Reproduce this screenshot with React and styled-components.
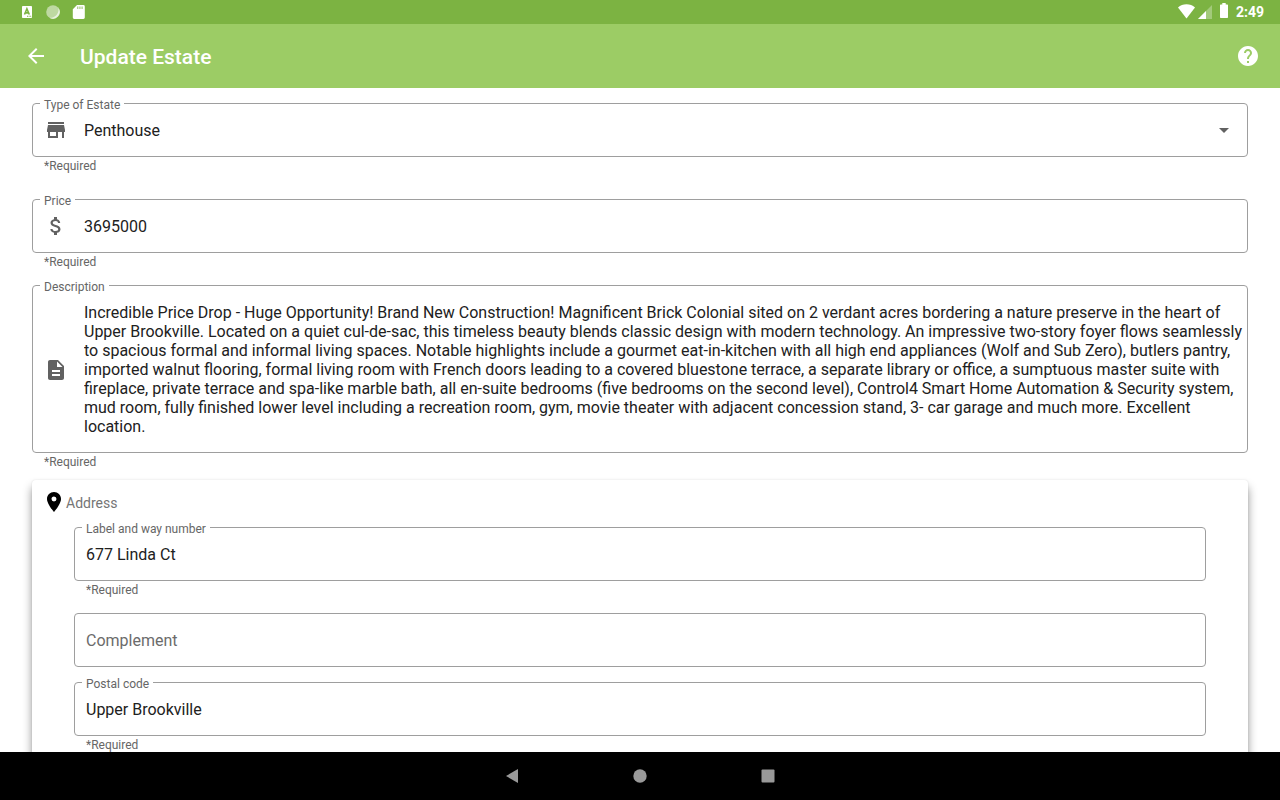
import React, { useId } from "react";
import styled, { createGlobalStyle, css } from "styled-components";
import {
  MdArrowBack,
  MdArrowDropDown,
  MdAttachMoney,
  MdDescription,
  MdHelp,
  MdPlace,
  MdStore,
} from "react-icons/md";

const GlobalStyle = createGlobalStyle`
  *, *::before, *::after { box-sizing: border-box; }
  body {
    margin: 0;
    background: #fff;
    color: #212121;
    font-family: Roboto, "Noto Sans", sans-serif;
    font-size: 16px;
  }
`;

const Screen = styled.div`
  display: flex;
  flex-direction: column;
  height: 100vh;
`;

const StatusBar = styled.div`
  display: flex;
  flex: none;
  align-items: center;
  justify-content: space-between;
  height: 24px;
  padding: 0 16px 0 20px;
  background: #7cb342;
  color: #fff;
`;

const StatusGroup = styled.div`
  display: flex;
  align-items: center;
  gap: ${(p) => p.$gap}px;

  svg {
    display: block;
  }
`;

const Clock = styled.time`
  font-size: 14px;
  font-weight: 700;
  line-height: 24px;
`;

const AppBar = styled.header`
  display: flex;
  flex: none;
  align-items: center;
  height: 64px;
  padding: 0 8px 0 12px;
  background: #9ccc65;
  color: #fff;
`;

const IconButton = styled.button`
  display: grid;
  place-items: center;
  width: 48px;
  height: 48px;
  padding: 0;
  border: 0;
  background: none;
  color: inherit;
  cursor: pointer;
`;

const Title = styled.h1`
  flex: 1;
  margin: 0 0 0 20px;
  padding-top: 2px;
  font-size: 21px;
  font-weight: 500;
  line-height: 24px;
`;

const Content = styled.main`
  flex: 1;
  min-height: 0;
  overflow-y: auto;
  scrollbar-width: none;
`;

const Form = styled.form`
  padding: 15px 32px 32px;
`;

const FieldRoot = styled.div`
  margin-bottom: ${(p) => p.$space}px;
`;

const Outline = styled.div`
  position: relative;
  display: flex;
  align-items: center;
  gap: 16px;
  min-height: 54px;
  padding: ${(p) => (p.$multiline ? "17px 3px 16px 11px" : "0 11px")};
  border: 1px solid #9e9e9e;
  border-radius: 4px;

  > svg {
    flex: none;
    color: #616161;
  }
`;

const FloatingLabel = styled.label`
  position: absolute;
  top: -7px;
  left: 7px;
  padding: 0 4px;
  background: #fff;
  color: #666;
  font-size: 12px;
  line-height: 16px;
`;

const control = css`
  flex: 1;
  min-width: 0;
  width: 100%;
  margin: 0;
  padding: 0;
  border: 0;
  outline: 0;
  background: transparent;
  color: #212121;
  font-family: inherit;
  font-size: 16px;
  line-height: 19px;
`;

const TextInput = styled.input`
  ${control}
  height: 52px;

  &::placeholder {
    color: #6b6b6b;
    opacity: 1;
  }
`;

const TextArea = styled.textarea`
  ${control}
  display: block;
  field-sizing: content;
  overflow: hidden;
  resize: none;
`;

const Select = styled.select`
  ${control}
  height: 52px;
  appearance: none;
`;

const Helper = styled.p`
  margin: 0;
  padding-left: 12px;
  color: #666;
  font-size: 12px;
  line-height: 18px;
`;

const Card = styled.section`
  padding: 10px 42px 24px;
  border-radius: 4px;
  background: #fff;
  box-shadow: 0 0 2px rgba(0, 0, 0, 0.1), 0 7px 10px rgba(0, 0, 0, 0.42);
`;

const CardHeader = styled.header`
  display: flex;
  align-items: center;
  margin: 0 0 11px -32px;
  color: #000;

  svg {
    align-self: flex-start;
  }
`;

const CardTitle = styled.h2`
  margin: 0;
  color: #757575;
  font-size: 14px;
  font-weight: 400;
  line-height: 26px;
`;

const NavBar = styled.nav`
  display: flex;
  flex: none;
  justify-content: center;
  height: 48px;
  background: #000;
`;

const NavButton = styled.button`
  display: grid;
  place-items: center;
  width: 128px;
  padding: 0;
  border: 0;
  background: none;
  cursor: pointer;
`;

function Field({ label, icon, required, multiline, space, children }) {
  const id = useId();
  const helperId = `${id}-helper`;
  return (
    <FieldRoot $space={space}>
      <Outline $multiline={multiline}>
        <FloatingLabel htmlFor={id}>{label}</FloatingLabel>
        {icon}
        {children({ id, "aria-describedby": required ? helperId : undefined })}
      </Outline>
      {required && <Helper id={helperId}>*Required</Helper>}
    </FieldRoot>
  );
}

const KeyboardIcon = () => (
  <svg width="14" height="14" viewBox="0 0 14 14" aria-hidden="true">
    <rect x="2" y="1" width="10" height="12" rx="0.8" fill="#fff" />
    <path
      fill="none"
      stroke="#7cb342"
      strokeWidth="1.6"
      d="M4.5 9.500 6.900 3.800l2.400 5.700M5.400 7.900h3"
    />
    <path fill="#7cb342" d="M7 10.700h1v1H7zm1.600 0h1v1h-1zm1.600 0h1v1h-1z" />
  </svg>
);

const SyncIcon = () => (
  <svg width="14" height="14" viewBox="0 0 14 14" aria-hidden="true">
    <circle cx="7" cy="7" r="6.800" fill="#fff" fillOpacity="0.5" />
    <path
      fill="#fff"
      fillOpacity="0.65"
      d="M12.200 2.600a6.800 6.800 0 0 1-8.800 10.100A8 8 0 0 0 12.200 2.600z"
    />
  </svg>
);

const SdCardIcon = () => (
  <svg width="13" height="14" viewBox="0 0 13 14" aria-hidden="true">
    <path
      fill="#fff"
      d="M5 0h6.400A1.400 1.400 0 0 1 12.800 1.400v11.200a1.400 1.400 0 0 1-1.400 1.400H2.200A1.400 1.400 0 0 1 .8 12.600V4.200z"
    />
    <path
      fill="#7cb342"
      fillOpacity="0.6"
      d="M5 1.500h1.400v2.500H5zm2.200 0h1.400v2.500H7.200zm2.200 0h1.400v2.500H9.400z"
    />
  </svg>
);

const WifiIcon = () => (
  <svg width="18" height="16" viewBox="0 0 18 16" aria-hidden="true">
    <path fill="#fff" d="M8.500 14.500 0 3.500C2.300 1.400 5.300.3 8.500.3s6.200 1.100 8.500 3.200z" />
  </svg>
);

const SignalIcon = () => (
  <svg width="14" height="16" viewBox="0 0 14 16" aria-hidden="true">
    <path fill="#fff" fillOpacity="0.3" d="M0 15 14 1v14z" />
    <path fill="#fff" d="M0 15 8 7v8z" />
  </svg>
);

const BatteryIcon = () => (
  <svg width="8" height="18" viewBox="0 0 8 18" aria-hidden="true">
    <path
      fill="#fff"
      d="M2.300 0h3.400v1.500h1.600a.7.7 0 0 1 .7.7v12.100a.7.7 0 0 1-.7.7H.7a.7.7 0 0 1-.7-.7V2.200a.7.7 0 0 1 .7-.7h1.600z"
    />
  </svg>
);

const BackShape = () => (
  <svg width="14" height="14" viewBox="0 0 14 14" aria-hidden="true">
    <path fill="#999" d="M13 0v14L1 7z" />
  </svg>
);

const HomeShape = () => (
  <svg width="14" height="14" viewBox="0 0 14 14" aria-hidden="true">
    <circle cx="7" cy="7" r="6.700" fill="#999" />
  </svg>
);

const RecentsShape = () => (
  <svg width="14" height="14" viewBox="0 0 14 14" aria-hidden="true">
    <rect x=".5" y=".5" width="13" height="13" rx="1" fill="#999" />
  </svg>
);

const description =
  "Incredible Price Drop - Huge Opportunity! Brand New Construction! Magnificent Brick Colonial sited on 2 verdant acres bordering a nature preserve in the heart of Upper Brookville. Located on a quiet cul-de-sac, this timeless beauty blends classic design with modern technology. An impressive two-story foyer flows seamlessly to spacious formal and informal living spaces. Notable highlights include a gourmet eat-in-kitchen with all high end appliances (Wolf and Sub Zero), butlers pantry, imported walnut flooring, formal living room with French doors leading to a covered bluestone terrace, a separate library or office, a sumptuous master suite with fireplace, private terrace and spa-like marble bath, all en-suite bedrooms (five bedrooms on the second level), Control4 Smart Home Automation & Security system, mud room, fully finished lower level including a recreation room, gym, movie theater with adjacent concession stand, 3- car garage and much more. Excellent location.";

export default function App() {
  return (
    <>
      <GlobalStyle />
      <Screen>
        <StatusBar>
          <StatusGroup $gap={12}>
            <KeyboardIcon />
            <SyncIcon />
            <SdCardIcon />
          </StatusGroup>
          <StatusGroup $gap={8}>
            <StatusGroup $gap={2}>
              <WifiIcon />
              <SignalIcon />
            </StatusGroup>
            <BatteryIcon />
            <Clock>2:49</Clock>
          </StatusGroup>
        </StatusBar>

        <AppBar>
          <IconButton type="button" aria-label="Back">
            <MdArrowBack size={24} />
          </IconButton>
          <Title>Update Estate</Title>
          <IconButton type="button" aria-label="Help">
            <MdHelp size={24} />
          </IconButton>
        </AppBar>

        <Content>
          <Form>
            <Field label="Type of Estate" icon={<MdStore size={24} />} required space={24}>
              {(props) => (
                <>
                  <Select {...props} defaultValue="Penthouse">
                    <option>Penthouse</option>
                  </Select>
                  <MdArrowDropDown size={24} aria-hidden="true" />
                </>
              )}
            </Field>

            <Field label="Price" icon={<MdAttachMoney size={24} />} required space={14}>
              {(props) => <TextInput {...props} inputMode="numeric" defaultValue="3695000" />}
            </Field>

            <Field
              label="Description"
              icon={<MdDescription size={24} />}
              required
              multiline
              space={9}
            >
              {(props) => <TextArea {...props} defaultValue={description} />}
            </Field>

            <Card>
              <CardHeader>
                <MdPlace size={24} aria-hidden="true" />
                <CardTitle>Address</CardTitle>
              </CardHeader>

              <Field label="Label and way number" required space={14}>
                {(props) => <TextInput {...props} defaultValue="677 Linda Ct" />}
              </Field>

              <FieldRoot $space={15}>
                <Outline>
                  <TextInput aria-label="Complement" placeholder="Complement" />
                </Outline>
              </FieldRoot>

              <Field label="Postal code" required space={14}>
                {(props) => <TextInput {...props} defaultValue="Upper Brookville" />}
              </Field>
            </Card>
          </Form>
        </Content>

        <NavBar>
          <NavButton type="button" aria-label="Back">
            <BackShape />
          </NavButton>
          <NavButton type="button" aria-label="Home">
            <HomeShape />
          </NavButton>
          <NavButton type="button" aria-label="Recent apps">
            <RecentsShape />
          </NavButton>
        </NavBar>
      </Screen>
    </>
  );
}
